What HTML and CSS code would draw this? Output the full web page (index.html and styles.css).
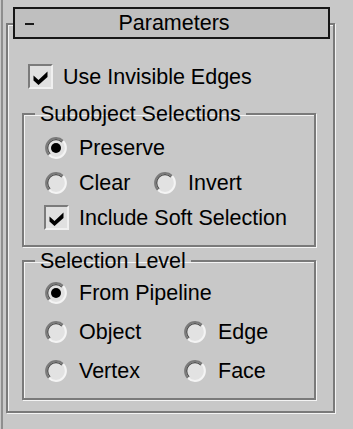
FILE: index.html
```html
<!DOCTYPE html>
<html lang="en">
<head>
    <meta charset="UTF-8">
    <meta name="viewport" content="width=device-width, initial-scale=1.0">
    <title>Parameters</title>
    <link rel="stylesheet" href="styles.css">
</head>
<body>
    <svg class="defs" width="0" height="0" aria-hidden="true">
        <symbol id="radio-off" viewBox="0 0 22 22">
            <circle cx="11" cy="11" r="10" fill="#e2e2e2"/>
            <path d="M3.93 18.07A10 10 0 0 1 18.07 3.93" fill="none" stroke="#7a7a7a" stroke-width="2"/>
            <path d="M5.13 16.87A8.3 8.3 0 0 1 16.87 5.13" fill="none" stroke="#4a4a4a" stroke-width="1.2"/>
            <path d="M18.07 3.93A10 10 0 0 1 3.93 18.07" fill="none" stroke="#f4f4f4" stroke-width="2"/>
        </symbol>
        <symbol id="radio-on" viewBox="0 0 22 22">
            <use href="#radio-off"/>
            <circle cx="11" cy="11" r="5" fill="#000"/>
        </symbol>
        <symbol id="tick" viewBox="0 0 21 21">
            <path d="M3.5 9.5L8.5 14L17.5 5.5V11L8.5 19L3.5 14.5Z" fill="#000"/>
        </symbol>
    </svg>

    <div class="side">
        <div class="rollout">
            <div class="rollout-title">
                <span class="collapse"></span>
                <span class="title-text">Parameters</span>
            </div>

            <div class="rollout-body">
                <label class="opt top-opt">
                    <span class="slot"><span class="check"><svg><use href="#tick"/></svg></span></span>
                    Use Invisible Edges
                </label>

                <fieldset class="group group-sub">
                    <legend>Subobject Selections</legend>
                    <label class="opt">
                        <span class="slot"><svg class="radio"><use href="#radio-on"/></svg></span>
                        Preserve
                    </label>
                    <div class="pair pair-sub">
                        <label class="opt">
                            <span class="slot"><svg class="radio"><use href="#radio-off"/></svg></span>
                            Clear
                        </label>
                        <label class="opt">
                            <span class="slot"><svg class="radio"><use href="#radio-off"/></svg></span>
                            Invert
                        </label>
                    </div>
                    <label class="opt">
                        <span class="slot"><span class="check"><svg><use href="#tick"/></svg></span></span>
                        Include Soft Selection
                    </label>
                </fieldset>

                <fieldset class="group group-level">
                    <legend>Selection Level</legend>
                    <label class="opt">
                        <span class="slot"><svg class="radio"><use href="#radio-on"/></svg></span>
                        From Pipeline
                    </label>
                    <div class="pair pair-level">
                        <label class="opt">
                            <span class="slot"><svg class="radio"><use href="#radio-off"/></svg></span>
                            Object
                        </label>
                        <label class="opt">
                            <span class="slot"><svg class="radio"><use href="#radio-off"/></svg></span>
                            Edge
                        </label>
                    </div>
                    <div class="pair pair-level">
                        <label class="opt">
                            <span class="slot"><svg class="radio"><use href="#radio-off"/></svg></span>
                            Vertex
                        </label>
                        <label class="opt">
                            <span class="slot"><svg class="radio"><use href="#radio-off"/></svg></span>
                            Face
                        </label>
                    </div>
                </fieldset>
            </div>
        </div>
    </div>
</body>
</html>
```

FILE: styles.css
```css
body {
    margin: 0;
    background-color: #c8c8c8;
    font-family: "Liberation Sans", Arial, sans-serif;
    font-size: 21.5px;
    line-height: 24px;
    color: #000;
}
.defs {
    position: absolute;
    width: 0;
    height: 0;
    overflow: hidden;
}
.side {
    margin-left: 1px;
    border-left: 2px solid #8e8e8e;
    height: 429px;
    padding: 7px 0 0 3px;
    box-sizing: border-box;
}
.rollout-title {
    margin-left: 7px;
    width: 317px;
    height: 32px;
    box-sizing: border-box;
    border: 2px solid #161616;
    background-color: #bfbfbf;
    display: flex;
    align-items: center;
    position: relative;
    z-index: 1;
}
.collapse {
    width: 9px;
    height: 2px;
    margin: 2px 0 0 10px;
    background-color: #1a1a1a;
}
.title-text {
    flex: 1;
    text-align: center;
    margin-right: 14px;
}
.rollout-body {
    margin-top: -16px;
    width: 329px;
    height: 390px;
    box-sizing: border-box;
    border: 2px solid #7a7a7a;
    box-shadow: inset 1px 1px 0 #f4f4f4, 1px 1px 0 #f4f4f4;
    padding-top: 34px;
}
.opt {
    display: flex;
    align-items: center;
    height: 35px;
    white-space: nowrap;
}
.top-opt {
    margin-left: 19px;
}
.slot {
    width: 26px;
    margin-right: 10px;
    display: flex;
    justify-content: center;
    align-items: center;
}
.check {
    width: 25px;
    height: 25px;
    box-sizing: border-box;
    border: 2px solid;
    border-color: #7b7b7b #f0f0f0 #f0f0f0 #7b7b7b;
    background-color: #e0e0e0;
}
.check svg {
    display: block;
    width: 21px;
    height: 21px;
}
.radio {
    display: block;
    width: 22px;
    height: 22px;
}
.group {
    margin: 8px 0 0 14px;
    width: 294px;
    min-width: 0;
    box-sizing: border-box;
    border: 2px solid #7a7a7a;
    box-shadow: inset 1px 1px 0 #f4f4f4, 1px 1px 0 #f4f4f4;
    padding: 4px 0 10px 0;
}
.group legend {
    margin-left: 11px;
    padding: 0 5px;
    line-height: 24px;
}
.group > .opt,
.group > .pair {
    margin-left: 19px;
}
.pair {
    display: grid;
}
.pair-sub {
    grid-template-columns: 109px auto;
}
.pair-level {
    grid-template-columns: 139px auto;
}
.group-level {
    margin-top: 2px;
    padding: 0 0 8px 0;
}
.group-level .opt {
    height: 39px;
}
```
